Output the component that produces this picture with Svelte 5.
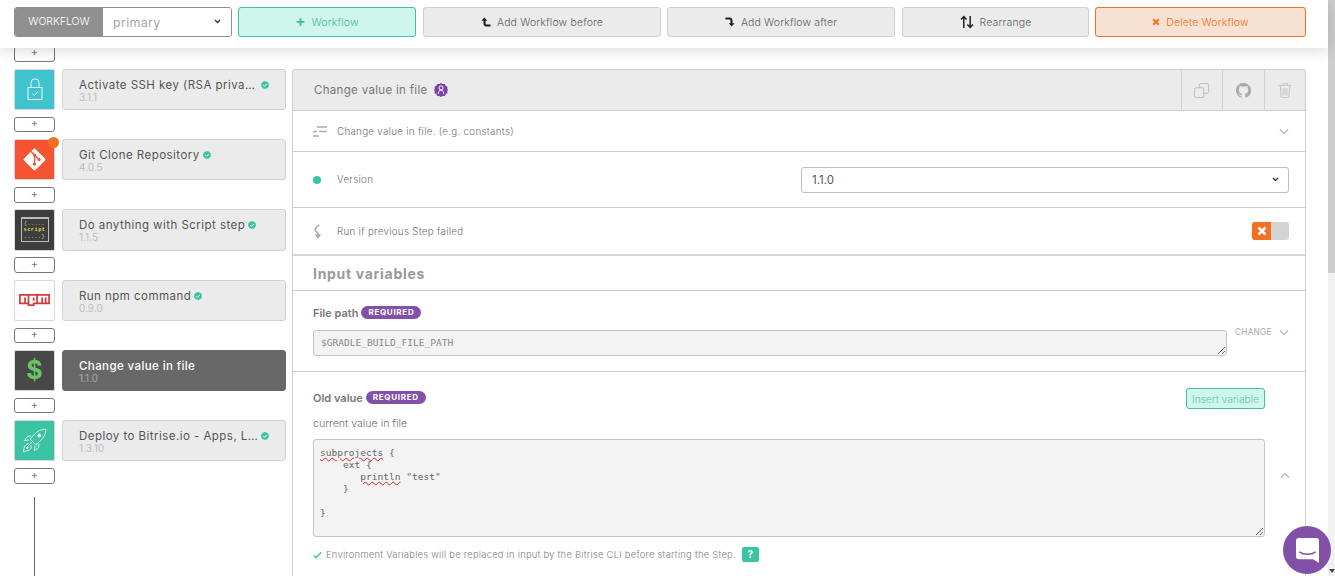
<script>
	const steps = [
		{ id: 'ssh', title: 'Activate SSH key (RSA private key)', version: '3.1.1', verified: true },
		{ id: 'git', title: 'Git Clone Repository', version: '4.0.5', verified: true, update: true },
		{ id: 'script', title: 'Do anything with Script step', version: '1.1.5', verified: true },
		{ id: 'npm', title: 'Run npm command', version: '0.9.0', verified: true },
		{ id: 'change', title: 'Change value in file', version: '1.1.0', selected: true },
		{ id: 'deploy', title: 'Deploy to Bitrise.io - Apps, Logs, Artifacts', version: '1.3.10', verified: true }
	];
</script>

{#snippet verifiedBadge()}
	<svg class="verified" viewBox="0 0 16 16">
		<path d="M8 0l2 1.200 2.300-.1 1 2 2 1.100-.1 2.300L16 8l-.8 1.500.1 2.300-2 1.100-1 2-2.300-.1L8 16l-2-1.200-2.300.1-1-2-2-1.100.1-2.300L0 8l.8-1.500-.1-2.300 2-1.100 1-2L6 1.200z" fill="#3bc3a3" />
		<path d="M4.600 8.200l2.400 2.400 4.400-4.600" fill="none" stroke="#fff" stroke-width="2" />
	</svg>
{/snippet}

{#snippet chevron(up = false)}
	<svg class="chevron" class:up viewBox="0 0 12 8">
		<path d="M1 1.500l5 5 5-5" fill="none" stroke="currentColor" stroke-width="1.300" />
	</svg>
{/snippet}

{#snippet selectArrow()}
	<svg class="select-arrow" viewBox="0 0 8 6">
		<path d="M1 1.200l3 3 3-3" fill="none" stroke="#333" stroke-width="1.500" />
	</svg>
{/snippet}

<div class="page">
	<div class="viewport">
		<header class="toolbar">
			<div class="workflow-select">
				<span class="workflow-label">WORKFLOW</span>
				<div class="select-wrap">
					<select class="workflow-value"><option>primary</option></select>
					{@render selectArrow()}
				</div>
			</div>
			<button class="btn btn-add"><span class="plus">+</span> Workflow</button>
			<button class="btn btn-before">
				<svg class="btn-icon" viewBox="0 0 12 12"><path d="M.5 4.500L4 .5l3.500 4H5.500V7.500c0 1 .5 1.500 1.500 1.500h4.500v2.500H6.500C4.300 11.500 3 10 3 7.800V4.500z" fill="#222" /></svg>
				Add Workflow before
			</button>
			<button class="btn btn-after">
				<svg class="btn-icon" viewBox="0 0 12 12"><path d="M.5.5h5C7.700.5 9 2 9 4.200V7.500h2.500l-3.500 4-3.500-4h2V4.500c0-1-.5-1.500-1.500-1.500H.5z" fill="#222" /></svg>
				Add Workflow after
			</button>
			<button class="btn btn-rearrange">
				<svg class="btn-icon large" viewBox="0 0 14 14"><path d="M3.800 13V2M1 4.500l2.800-3 2.800 3M10.200 1v11M7.400 9.500l2.800 3 2.800-3" fill="none" stroke="#222" stroke-width="1.500" /></svg>
				Rearrange
			</button>
			<button class="btn btn-delete"><svg class="btn-icon small" viewBox="0 0 10 10"><path d="M1.500 1.500l7 7M8.500 1.500l-7 7" stroke="#f37021" stroke-width="2.400" /></svg> Delete Workflow</button>
		</header>

		<div class="content">
			<aside class="steps">
				<button class="add-step first">+</button>
				{#each steps as step}
					<div class="step-row">
						<div class="step-icon {step.id}">
							{#if step.id === 'ssh'}
								<svg viewBox="0 0 24 34" width="16" height="23">
									<path d="M6 14V7a6 6 0 0 1 12 0v7" fill="none" stroke="#fff" stroke-width="1.300" />
									<rect x="1.500" y="14" width="21" height="18" fill="none" stroke="#fff" stroke-width="1.400" />
									<path d="M8 23l3 3 5.500-6" fill="none" stroke="#fff" stroke-width="1.400" />
								</svg>
							{:else if step.id === 'git'}
								<svg viewBox="0 0 97 97" width="23" height="23">
									<path fill="#fff" d="M92.710 44.408 52.591 4.291c-2.310-2.311-6.057-2.311-8.369 0l-8.330 8.332L46.459 23.190c2.456-.83 5.272-.273 7.229 1.685 1.969 1.970 2.521 4.810 1.670 7.275l10.186 10.185c2.465-.85 5.307-.3 7.275 1.671 2.750 2.750 2.750 7.206 0 9.958-2.752 2.751-7.208 2.751-9.961 0-2.068-2.070-2.580-5.110-1.531-7.658l-9.500-9.499v24.997c.67.332 1.303.774 1.861 1.332 2.750 2.750 2.750 7.206 0 9.959-2.750 2.749-7.209 2.749-9.957 0-2.750-2.754-2.750-7.210 0-9.959.68-.679 1.467-1.193 2.307-1.537v-25.230c-.84-.344-1.625-.853-2.307-1.537-2.083-2.082-2.584-5.140-1.516-7.698L31.798 16.715 4.288 44.222c-2.311 2.313-2.311 6.060 0 8.371l40.121 40.118c2.310 2.311 6.056 2.311 8.369 0L92.710 52.779c2.311-2.311 2.311-6.060 0-8.371z" />
								</svg>
							{:else if step.id === 'script'}
								<div class="script-frame">
									<span>&#123;.....</span>
									<span class="script-word">script</span>
									<span>.....&#125;</span>
								</div>
							{:else if step.id === 'npm'}
								<svg viewBox="0 0 18 7" width="31" height="12">
									<path fill="#d8363a" fill-rule="evenodd" d="M0 0h18v6H9v1H5V6H0zM1 5h2V2h1v3h1V1H1zM6 1v5h2V5h2V1zM8 2h1v2H8zM11 1v4h2V2h1v3h1V2h1v3h1V1z" />
								</svg>
							{:else if step.id === 'change'}
								<span class="dollar">$</span>
							{:else}
								<svg viewBox="0 0 26 26" width="25" height="25" fill="none" stroke="#fff" stroke-width=".8">
									<path d="M25 1c-5 .3-9 2.200-12 5.500l-4.500 5 6 6 5-4.500C22.800 10 24.700 6 25 1z" />
									<circle cx="18" cy="7.800" r="1.500" fill="#fff" />
									<path d="M9.500 8.500H6L2.500 13l5-.6M17.500 16.500V20L13 23.500l.6-5M11 14l-5.500 5.500" />
									<path d="M5.500 16.500c-2 .8-3.500 3-4 8 5-.5 7.200-2 8-4 .3-1.200-.5-2.500-1.500-3.300-.8-.8-1.500-1-2.500-.7z" />
									<circle cx="5.500" cy="20.500" r="1" fill="#fff" />
								</svg>
							{/if}
							{#if step.update}<span class="update-dot"></span>{/if}
						</div>
						<div class="step-card" class:selected={step.selected}>
							<div class="step-title">
								<span class="step-name">{step.title}</span>
								{#if step.verified}{@render verifiedBadge()}{/if}
							</div>
							<div class="step-version">{step.version}</div>
						</div>
					</div>
					<button class="add-step">+</button>
				{/each}
				<div class="timeline"></div>
			</aside>

			<main class="panel">
				<div class="panel-head">
					<div class="panel-title">
						<span>Change value in file</span>
						<svg class="community" viewBox="0 0 16 16">
							<path d="M8 0l2 1.200 2.300-.1 1 2 2 1.100-.1 2.300L16 8l-.8 1.500.1 2.300-2 1.100-1 2-2.300-.1L8 16l-2-1.200-2.300.1-1-2-2-1.100.1-2.300L0 8l.8-1.500-.1-2.300 2-1.100 1-2L6 1.200z" fill="#7a45a6" />
							<circle cx="8" cy="5.600" r="2.300" fill="none" stroke="#fff" stroke-width="1.100" />
							<path d="M4.800 12.500c.2-2.600 1.300-4.300 3.200-4.300s3 1.700 3.200 4.300" fill="none" stroke="#fff" stroke-width="1.100" />
						</svg>
					</div>
					<div class="panel-action">
						<svg viewBox="0 0 16 16" width="15" height="15" fill="none" stroke="#bbb" stroke-width="1">
							<rect x=".5" y="5" width="10" height="10.500" rx="2" />
							<path d="M5.500 5V2.500a2 2 0 0 1 2-2h6a2 2 0 0 1 2 2V9a2 2 0 0 1-2 2h-3" />
						</svg>
					</div>
					<div class="panel-action">
						<svg viewBox="0 0 16 16" width="15" height="15"><path fill="#a9a9a9" d="M8 0C3.580 0 0 3.580 0 8c0 3.540 2.290 6.530 5.470 7.590.4.070.55-.17.55-.38 0-.19-.01-.82-.01-1.490-2.010.37-2.530-.49-2.690-.94-.09-.23-.48-.94-.82-1.130-.28-.15-.68-.52-.01-.53.63-.01 1.080.58 1.230.82.72 1.210 1.870.87 2.330.66.070-.52.28-.87.51-1.070-1.780-.2-3.640-.89-3.640-3.950 0-.87.31-1.590.82-2.150-.08-.2-.36-1.020.08-2.120 0 0 .67-.21 2.200.82.64-.18 1.320-.27 2-.27.68 0 1.360.09 2 .27 1.530-1.040 2.200-.82 2.200-.82.44 1.100.16 1.920.08 2.120.51.56.82 1.270.82 2.150 0 3.070-1.870 3.750-3.650 3.950.29.25.54.73.54 1.480 0 1.070-.01 1.930-.01 2.200 0 .21.15.46.55.38A8.013 8.013 0 0 0 16 8c0-4.420-3.580-8-8-8z" /></svg>
					</div>
					<div class="panel-action">
						<svg viewBox="0 0 14 16" width="14" height="15" fill="none" stroke="#c4c4c4" stroke-width="1">
							<path d="M0 2.500h14M4.500 2.500V1a.5.5 0 0 1 .5-.5h4a.5.5 0 0 1 .5.5v1.500M2 2.500l.8 11.500a1.500 1.500 0 0 0 1.500 1.500h5.400a1.500 1.500 0 0 0 1.500-1.500L12 2.500M5 5.500v7.500M7 5.500v7.500M9 5.500v7.500" />
						</svg>
					</div>
				</div>

				<div class="row row-desc">
					<svg class="row-icon" viewBox="0 0 14 11" width="14" height="11">
						<path d="M4 1h10M0 5.500h4M6 5.500h8M0 10h6" stroke="#aaa" stroke-width="1.300" fill="none" />
					</svg>
					<span class="row-text">Change value in file. (e.g. constants)</span>
					{@render chevron()}
				</div>

				<div class="row row-version">
					<span class="row-icon"><span class="dot"></span></span>
					<span class="row-text">Version</span>
					<div class="select-wrap version-wrap">
						<select class="version-select"><option>1.1.0</option></select>
						{@render selectArrow()}
					</div>
				</div>

				<div class="row row-run">
					<svg class="row-icon" viewBox="0 0 9 16" width="9" height="15">
						<path d="M6.500 1C4 2.500 2 4.500 2 6.500c0 1.500 3 2 3 4v3.500M2.500 10.800L5 14.500l2.500-3.700" fill="none" stroke="#aaa" stroke-width="1.700" />
					</svg>
					<span class="row-text">Run if previous Step failed</span>
					<div class="toggle">
						<span class="toggle-off">
							<svg viewBox="0 0 10 10" width="10" height="10"><path d="M1.500 1.500l7 7M8.500 1.500l-7 7" stroke="#fff" stroke-width="2.500" /></svg>
						</span>
					</div>
				</div>

				<h2 class="inputs-title">Input variables</h2>

				<section class="input-block file-path">
					<div class="input-label">File path <span class="required">REQUIRED</span></div>
					<div class="input-line">
						<textarea class="field" readonly spellcheck="false">$GRADLE_BUILD_FILE_PATH</textarea>
						<span class="change-link">CHANGE</span>
						{@render chevron()}
					</div>
				</section>

				<section class="input-block old-value">
					<div class="old-head">
						<div class="input-label">Old value <span class="required">REQUIRED</span></div>
						<button class="insert-var">Insert variable</button>
					</div>
					<div class="hint">current value in file</div>
					<div class="input-line code-line">
<pre class="field code"><span class="typo">subprojects</span> &#123;
    ext &#123;
       <span class="typo">println</span> "test"
    &#125;

&#125;</pre>
						{@render chevron(true)}
					</div>
					<div class="env-note">
						<svg viewBox="0 0 10 8" width="9" height="8"><path d="M1 4.500l2.500 2.500L9 1" fill="none" stroke="#3bc3a3" stroke-width="1.600" /></svg>
						<span>Environment Variables will be replaced in input by the Bitrise CLI before starting the Step.</span>
						<span class="help">?</span>
					</div>
				</section>
			</main>
		</div>
	</div>

	<div class="scrollbar">
		<div class="thumb"></div>
		<span class="scroll-arrow"></span>
	</div>

	<button class="chat" aria-label="Open chat">
		<svg viewBox="0 0 24 26" width="23" height="25">
			<path d="M3 0h18a3 3 0 0 1 3 3v23l-6-4H3a3 3 0 0 1-3-3V3a3 3 0 0 1 3-3z" fill="#fff" />
			<path d="M3.500 14.500c2.500 1.700 5.500 2.500 8.500 2.500s6-.8 8.500-2.500" fill="none" stroke="#8350a8" stroke-width="1.500" />
		</svg>
	</button>
</div>

<style>
	:global(body) {
		margin: 0;
		background: #fff;
	}

	.page {
		display: flex;
		height: 100vh;
		overflow: hidden;
		font-family: Inter, 'Liberation Sans', sans-serif;
		color: #777;
	}

	button,
	select,
	textarea {
		font-family: inherit;
	}

	.viewport {
		flex: 1;
		min-width: 0;
		display: flex;
		flex-direction: column;
	}

	.toolbar {
		position: relative;
		z-index: 2;
		flex: none;
		box-sizing: border-box;
		height: 48px;
		padding: 7px 22px 0 14px;
		display: flex;
		gap: 6px;
		background: #fff;
		box-shadow: 0 2px 14px rgba(0, 0, 0, 0.16);
	}

	.workflow-select {
		box-sizing: border-box;
		width: 218px;
		height: 30px;
		display: flex;
		border: 1px solid #8f8f8f;
		border-radius: 3px;
		overflow: hidden;
	}

	.workflow-label {
		width: 88px;
		background: #909090;
		color: #fff;
		font-size: 10.5px;
		font-weight: 300;
		line-height: 28px;
		text-align: center;
	}

	.select-wrap {
		position: relative;
		flex: 1;
		min-width: 0;
		display: flex;
	}

	.select-arrow {
		position: absolute;
		right: 10px;
		top: 50%;
		width: 7px;
		height: 5px;
		margin-top: -3px;
		pointer-events: none;
	}

	.workflow-value {
		flex: 1;
		min-width: 0;
		appearance: none;
		border: none;
		outline: none;
		background: #fff;
		color: #a5a5a5;
		font-size: 12.5px;
		letter-spacing: 0.3px;
		padding-left: 10px;
	}

	.btn {
		box-sizing: border-box;
		height: 30px;
		display: flex;
		align-items: center;
		justify-content: center;
		gap: 6px;
		border: 1px solid #cfcfcf;
		border-radius: 3px;
		background: #ebebeb;
		color: #5f5f5f;
		font-size: 10.5px;
		font-weight: 300;
		letter-spacing: 0.15px;
		padding: 0;
	}

	.btn-add {
		width: 178px;
		background: #d0f5ec;
		border-color: #3bc3a3;
		color: #3fc0a2;
	}

	.plus {
		margin-top: -3px;
		font-size: 15px;
		font-weight: 700;
		color: #3bc3a3;
	}

	.btn-before {
		width: 238px;
		margin-left: 1px;
	}

	.btn-after {
		width: 228px;
	}

	.btn-rearrange {
		width: 187px;
		margin-left: 1px;
	}

	.btn-delete {
		width: 211px;
		background: #f6e1d3;
		border-color: #f37021;
		color: #f37021;
	}

	.btn-icon {
		width: 10px;
		height: 10px;
	}

	.btn-icon.large {
		width: 14px;
		height: 14px;
	}

	.btn-icon.small {
		width: 8px;
		height: 8px;
	}

	.content {
		flex: 1;
		min-height: 0;
		display: flex;
		gap: 6px;
		padding-left: 14px;
		padding-right: 22px;
	}

	.steps {
		flex: none;
		width: 272px;
		display: flex;
		flex-direction: column;
		gap: 6.67px;
	}

	.add-step {
		flex: none;
		box-sizing: border-box;
		width: 41px;
		height: 15.67px;
		padding: 0 0 2px;
		border: 1px solid #777;
		border-radius: 3px;
		background: #fff;
		color: #777;
		font-size: 11px;
		line-height: 10px;
	}

	.add-step.first {
		margin-top: -1.67px;
		padding-bottom: 4px;
	}

	.step-row {
		flex: none;
		height: 41.33px;
		display: flex;
		gap: 7px;
	}

	.step-icon {
		position: relative;
		box-sizing: border-box;
		flex: none;
		width: 41px;
		display: flex;
		align-items: center;
		justify-content: center;
		border: 1px solid #d8d8d8;
		border-radius: 2px;
	}

	.ssh {
		background: #3fc3cf;
	}

	.git {
		background: #f55331;
	}

	.script {
		background: #3e3e3e;
	}

	.npm {
		background: #fff;
	}

	.change {
		background: #484848;
	}

	.deploy {
		background: #3bc3a3;
	}

	.script-frame {
		box-sizing: border-box;
		width: 28px;
		height: 25px;
		border: 1px solid #bbb;
		border-top-width: 2px;
		display: flex;
		flex-direction: column;
		align-items: center;
		justify-content: center;
		font-family: 'Liberation Mono', monospace;
		font-size: 5px;
		letter-spacing: 0.5px;
		line-height: 6.5px;
		white-space: nowrap;
		color: #ddd;
	}

	.script-frame span:first-child {
		color: #e6d54a;
	}

	.script-word {
		color: #e6d54a;
		font-weight: 700;
		font-size: 5.3px;
	}

	.dollar {
		font-size: 25px;
		font-weight: 700;
		color: #6cc565;
		line-height: 1;
	}

	.update-dot {
		position: absolute;
		top: -3px;
		right: -5px;
		width: 11px;
		height: 11px;
		border-radius: 50%;
		background: #f37021;
	}

	.step-card {
		box-sizing: border-box;
		flex: 1;
		min-width: 0;
		padding: 8px 16px 0 16px;
		border: 1px solid #d2d2d2;
		border-radius: 3px;
		background: #ebebeb;
	}

	.step-card.selected {
		background: #686868;
		border-color: #686868;
	}

	.step-title {
		display: flex;
		align-items: center;
		gap: 3px;
		height: 14px;
		font-size: 11.5px;
		letter-spacing: 0.46px;
		color: #555;
	}

	.step-name {
		max-width: 183.5px;
		white-space: nowrap;
		overflow: hidden;
		text-overflow: ellipsis;
	}

	.selected .step-title {
		color: #fff;
		font-weight: 500;
		letter-spacing: 0.4px;
	}

	.step-version {
		font-size: 10px;
		line-height: 11px;
		color: #bdbdbd;
	}

	.selected .step-version {
		color: #a8a8a8;
	}

	.verified {
		flex: none;
		width: 8px;
		height: 8px;
	}

	.timeline {
		flex: none;
		width: 1px;
		height: 100px;
		margin: 7px 0 0 20px;
		background: #666;
	}

	.panel {
		flex: 1;
		min-width: 0;
		margin-top: 21px;
		border: 1px solid #cdcdcd;
		border-bottom: none;
		border-radius: 3px 3px 0 0;
	}

	.panel-head {
		box-sizing: border-box;
		height: 41px;
		display: flex;
		background: #ebebeb;
		border-bottom: 1px solid #cdcdcd;
	}

	.panel-title {
		flex: 1;
		display: flex;
		align-items: center;
		gap: 6px;
		padding-left: 21px;
		font-size: 11.5px;
		letter-spacing: 0.32px;
		color: #777;
	}

	.community {
		width: 14px;
		height: 14px;
	}

	.panel-action {
		box-sizing: border-box;
		width: 41.5px;
		display: flex;
		align-items: center;
		justify-content: center;
		border-left: 1px solid #d2d2d2;
	}

	.row {
		box-sizing: border-box;
		display: flex;
		align-items: center;
		padding: 0 16px 0 20px;
		border-bottom: 1px solid #cdcdcd;
	}

	.row-desc {
		height: 41px;
	}

	.row-version {
		height: 56px;
	}

	.row-run {
		height: 48px;
		border-bottom-width: 2px;
		border-bottom-color: #d6d6d6;
	}

	.row-icon {
		flex: none;
		width: 14px;
		margin-right: 10px;
	}

	.row-run .row-icon {
		width: 9px;
		margin: 0 15px 0 0;
	}

	.dot {
		display: block;
		width: 8px;
		height: 8px;
		border-radius: 50%;
		background: #3bc3a3;
	}

	.row-text {
		flex: 1;
		font-size: 9.8px;
		font-weight: 300;
		letter-spacing: 0.28px;
		color: #707070;
	}

	.chevron {
		flex: none;
		width: 10px;
		height: 7px;
		color: #aaa;
	}

	.chevron.up {
		transform: rotate(180deg);
	}

	.version-wrap {
		flex: none;
		width: 488px;
	}

	.version-select {
		box-sizing: border-box;
		width: 100%;
		height: 26px;
		appearance: none;
		padding-left: 10px;
		border: 1px solid #bdbdbd;
		border-radius: 3px;
		background: #fff;
		color: #555;
		font-size: 11.5px;
	}

	.toggle {
		width: 37px;
		height: 18px;
		border-radius: 3px;
		background: #d4d4d4;
		overflow: hidden;
	}

	.toggle-off {
		width: 19px;
		height: 18px;
		display: flex;
		align-items: center;
		justify-content: center;
		background: #f37021;
	}

	.inputs-title {
		box-sizing: border-box;
		height: 35px;
		margin: 0;
		padding: 0 20px;
		font-size: 14px;
		font-weight: 700;
		letter-spacing: 0.7px;
		line-height: 36px;
		color: #9a9a9a;
		border-bottom: 1px solid #cdcdcd;
	}

	.input-block {
		padding-left: 20px;
	}

	.file-path {
		box-sizing: border-box;
		height: 81px;
		padding-top: 15px;
		padding-right: 16px;
		border-bottom: 1px solid #cdcdcd;
	}

	.input-label {
		display: flex;
		align-items: center;
		gap: 3px;
		height: 13px;
		font-size: 11px;
		font-weight: 600;
		color: #777;
	}

	.required {
		box-sizing: border-box;
		height: 12.5px;
		padding: 0 7px;
		border-radius: 7px;
		background: #8350a8;
		color: #fff;
		font-size: 8px;
		font-weight: 700;
		letter-spacing: 0.7px;
		line-height: 12.5px;
	}

	.input-line {
		display: flex;
		align-items: center;
	}

	.file-path .input-line {
		margin-top: 11px;
	}

	.field {
		box-sizing: border-box;
		padding: 6px 7px;
		border: 1px solid #c4c4c4;
		border-radius: 3px;
		background: #f3f3f3;
		color: #8a8a8a;
		font-family: 'DejaVu Sans Mono', 'Liberation Mono', monospace;
		font-size: 9.55px;
		line-height: 12px;
		outline: none;
	}

	textarea.field {
		flex: none;
		display: block;
		width: 914px;
		height: 26px;
		resize: vertical;
	}

	.change-link {
		margin: -22px 7px 0 8px;
		font-size: 8.3px;
		color: #aaa;
		letter-spacing: 0.2px;
	}

	.file-path .chevron {
		margin-top: -22px;
	}

	.old-value {
		padding-top: 16px;
		padding-right: 16px;
	}

	.old-head {
		display: flex;
		justify-content: space-between;
		padding-right: 24px;
	}

	.old-head .input-label {
		margin-top: 3px;
	}

	.insert-var {
		box-sizing: border-box;
		width: 79px;
		height: 21px;
		padding: 0;
		border: 1px solid #3bc3a3;
		border-radius: 3px;
		background: #d0f5ec;
		color: #5fcab0;
		font-size: 10.2px;
		font-weight: 300;
	}

	.hint {
		margin-top: 8px;
		font-size: 10.6px;
		font-weight: 300;
		line-height: 14px;
		color: #707070;
	}

	.code-line {
		margin-top: 8px;
		gap: 15px;
	}

	.code {
		flex: none;
		width: 952px;
		height: 98px;
		margin: 0;
		padding: 7px 6px;
		white-space: pre;
		overflow: auto;
		resize: vertical;
		color: #666;
	}

	.code-line .chevron {
		margin-top: -26px;
	}

	.typo {
		text-decoration: underline wavy #e02020 0.7px;
		text-underline-offset: 1px;
	}

	.env-note {
		display: flex;
		align-items: center;
		gap: 4px;
		margin-top: 10px;
		font-size: 9.4px;
		font-weight: 300;
		letter-spacing: 0.25px;
		color: #808080;
	}

	.help {
		width: 17px;
		height: 15px;
		margin-left: 2px;
		border-radius: 2px;
		background: #3bc3a3;
		color: #fff;
		font-size: 10px;
		font-weight: 700;
		line-height: 15px;
		text-align: center;
	}

	.scrollbar {
		position: relative;
		flex: none;
		width: 7px;
		background: #f1f1f1;
	}

	.thumb {
		height: 273px;
		background: #cdcdcd;
	}

	.scroll-arrow {
		position: absolute;
		left: 1px;
		bottom: 3px;
		width: 0;
		height: 0;
		border-left: 3px solid transparent;
		border-right: 3px solid transparent;
		border-top: 4px solid #444;
	}

	.chat {
		position: fixed;
		left: 1283px;
		top: 526px;
		z-index: 3;
		width: 48px;
		height: 48px;
		padding: 0;
		border: none;
		border-radius: 50%;
		background: #8350a8;
		display: flex;
		align-items: center;
		justify-content: center;
	}
</style>
